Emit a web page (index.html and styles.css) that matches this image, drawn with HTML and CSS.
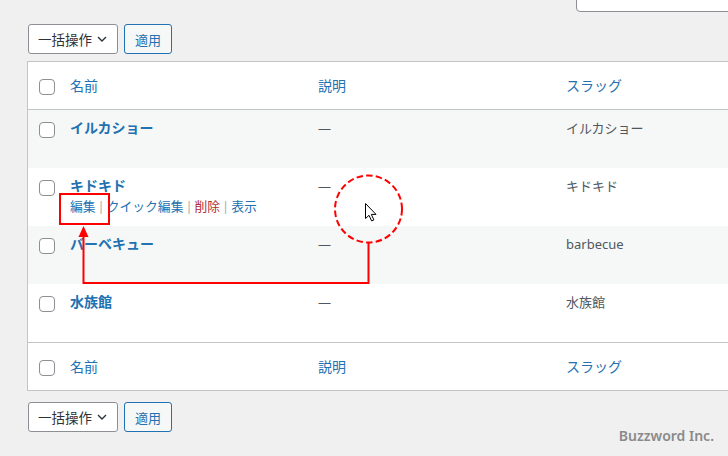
FILE: index.html
```html
<!DOCTYPE html>
<html lang="ja">
<head>
    <meta charset="UTF-8">
    <meta name="viewport" content="width=device-width, initial-scale=1.0">
    <link rel="stylesheet" href="styles.css">
    <title>タグ</title>
</head>
<body>
    <div class="wrap">
        <!-- search box, cut off at the top -->
        <div class="search-row">
            <input type="search" class="search-input">
        </div>

        <!-- bulk actions (top) -->
        <div class="tablenav">
            <div class="bulk-select">
                <span>一括操作</span>
                <svg class="chevron" width="10" height="6" viewBox="0 0 10 6"><path d="M1 1l4 4 4-4" fill="none" stroke="#2c3338" stroke-width="1.4"/></svg>
            </div>
            <button type="button" class="button">適用</button>
        </div>

        <table class="terms">
            <colgroup>
                <col class="col-check">
                <col class="col-name">
                <col class="col-desc">
                <col>
            </colgroup>
            <thead>
                <tr>
                    <td class="check-col"><input type="checkbox"></td>
                    <th>名前</th>
                    <th>説明</th>
                    <th>スラッグ</th>
                </tr>
            </thead>
            <tbody>
                <tr class="alt">
                    <td class="check-col"><input type="checkbox"></td>
                    <td><a class="row-title">イルカショー</a></td>
                    <td class="desc">—</td>
                    <td class="slug">イルカショー</td>
                </tr>
                <tr>
                    <td class="check-col"><input type="checkbox"></td>
                    <td>
                        <a class="row-title">キドキド</a>
                        <div class="row-actions">
                            <a>編集</a><span class="sep">|</span><a>クイック編集</a><span class="sep">|</span><a class="delete">削除</a><span class="sep">|</span><a>表示</a>
                        </div>
                    </td>
                    <td class="desc">—</td>
                    <td class="slug">キドキド</td>
                </tr>
                <tr class="alt">
                    <td class="check-col"><input type="checkbox"></td>
                    <td><a class="row-title">バーベキュー</a></td>
                    <td class="desc">—</td>
                    <td class="slug">barbecue</td>
                </tr>
                <tr>
                    <td class="check-col"><input type="checkbox"></td>
                    <td><a class="row-title">水族館</a></td>
                    <td class="desc">—</td>
                    <td class="slug">水族館</td>
                </tr>
            </tbody>
            <tfoot>
                <tr>
                    <td class="check-col"><input type="checkbox"></td>
                    <th>名前</th>
                    <th>説明</th>
                    <th>スラッグ</th>
                </tr>
            </tfoot>
        </table>

        <!-- bulk actions (bottom) -->
        <div class="tablenav bottom">
            <div class="bulk-select">
                <span>一括操作</span>
                <svg class="chevron" width="10" height="6" viewBox="0 0 10 6"><path d="M1 1l4 4 4-4" fill="none" stroke="#2c3338" stroke-width="1.4"/></svg>
            </div>
            <button type="button" class="button">適用</button>
        </div>
    </div>

    <!-- red callout drawn over the screenshot -->
    <svg class="annotation" width="728" height="456" viewBox="0 0 728 456">
        <rect x="60" y="194" width="49" height="30" fill="none" stroke="#f00" stroke-width="2"/>
        <polyline points="83.5,235 83.5,283 368.5,283 368.5,243" fill="none" stroke="#f00" stroke-width="2"/>
        <polygon points="83.5,226 78.5,237 88.5,237" fill="#f00"/>
        <circle cx="368.5" cy="209" r="33.5" fill="none" stroke="#f00" stroke-width="2" stroke-dasharray="6.5 3.2"/>
        <path d="M365.5 203.5v15l3.5-3.2 2.6 5.6 2.3-1-2.6-5.5h4.7z" fill="#fff" stroke="#000" stroke-width="1"/>
    </svg>

    <div class="credit">Buzzword Inc.</div>
</body>
</html>
```

FILE: styles.css
```css
* {
    box-sizing: border-box;
}

html, body {
    margin: 0;
    padding: 0;
    height: 456px;
    overflow: hidden;
    background-color: #f0f0f1;
}

body {
    position: relative;
    font-family: "Noto Sans", "Noto Sans CJK JP", sans-serif;
    font-size: 13px;
    color: #3c434a;
}

.wrap {
    padding-left: 27px;
    overflow: hidden;
}

.search-row {
    display: flex;
    justify-content: flex-end;
    height: 30px;
    margin-top: -18px;
    margin-right: -20px;
}

.search-input {
    width: 172px;
    height: 30px;
    margin: 0;
    border: 1px solid #8c8f94;
    border-radius: 4px;
    background-color: #fff;
}

.tablenav {
    display: flex;
    gap: 6px;
    height: 30px;
    margin: 12px 0 7px 1px;
}

.tablenav.bottom {
    margin: 11px 0 0 1px;
}

.bulk-select {
    display: flex;
    align-items: center;
    width: 90px;
    height: 30px;
    padding-left: 9px;
    border: 1px solid #8c8f94;
    border-radius: 3px;
    background-color: #fff;
    font-size: 13.5px;
    color: #2c3338;
}

.chevron {
    margin-left: auto;
    margin-right: 10px;
}

.button {
    width: 48px;
    height: 30px;
    padding: 0;
    border: 1px solid #2271b1;
    border-radius: 3px;
    background-color: #f6f7f7;
    color: #2271b1;
    font-family: inherit;
    font-size: 13px;
}

/* list table */
.terms {
    width: 740px;
    table-layout: fixed;
    border-collapse: separate;
    border-spacing: 0;
    border: 1px solid #c3c4c7;
    background-color: #fff;
}

.col-check {
    width: 32px;
}

.col-name,
.col-desc {
    width: 248px;
}

.terms th,
.terms td {
    padding: 8px 10px 0;
    text-align: left;
    vertical-align: top;
    line-height: 20px;
}

.terms thead th,
.terms thead td,
.terms tfoot th,
.terms tfoot td {
    height: 48px;
    padding: 0 10px;
    vertical-align: middle;
    font-size: 14px;
    font-weight: 400;
    color: #2271b1;
}

.terms thead th,
.terms thead td {
    border-bottom: 1px solid #c3c4c7;
}

.terms tfoot th,
.terms tfoot td {
    border-top: 1px solid #c3c4c7;
}

.terms tbody td {
    height: 58px;
}

.terms tbody tr.alt {
    background-color: #f6f7f7;
}

.terms td.check-col {
    padding-left: 11px;
    padding-right: 0;
}

.terms tbody td.check-col {
    padding-top: 12px;
}

.terms thead td.check-col,
.terms tfoot td.check-col {
    padding-top: 2px;
}

input[type="checkbox"] {
    appearance: none;
    display: block;
    width: 16px;
    height: 16px;
    margin: 0;
    border: 1px solid #8c8f94;
    border-radius: 4px;
    background-color: #fff;
}

.row-title {
    display: block;
    font-size: 14px;
    font-weight: 700;
    color: #2271b1;
    text-decoration: none;
}

.row-actions {
    font-size: 12.8px;
    color: #a7aaad;
}

.row-actions a {
    color: #2271b1;
}

.row-actions a.delete {
    color: #b32d2e;
}

.row-actions .sep {
    margin: 0 2px;
}

.desc,
.slug {
    font-size: 13px;
    color: #50575e;
}

/* overlays */
.annotation {
    position: absolute;
    top: 0;
    left: 0;
    pointer-events: none;
}

.credit {
    position: absolute;
    right: 14px;
    bottom: 11px;
    font-size: 14px;
    font-weight: 600;
    color: #8a8a8a;
}
```
